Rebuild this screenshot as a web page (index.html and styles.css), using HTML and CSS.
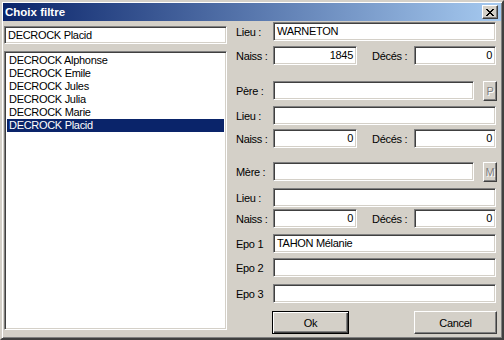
FILE: index.html
```html
<!DOCTYPE html>
<html>
<head>
<meta charset="utf-8">
<link rel="stylesheet" href="styles.css">
</head>
<body>
<div class="window">
  <div class="titlebar">
    <span class="title">Choix filtre</span>
    <div class="close">
      <svg width="8" height="7" viewBox="0 0 8 7"><path d="M0 0h2v1h1v1h2V1h1V0h2v1H7v1H6v1H5v1h1v1h1v1h1v1H6V6H5V5H3v1H2v1H0V6h1V5h1V4h1V3H2V2H1V1H0z" fill="#000"/></svg>
    </div>
  </div>
  <div class="body">
    <div class="left">
      <div class="edit search">DECROCK Placid</div>
      <div class="listbox">
        <div class="item">DECROCK Alphonse</div>
        <div class="item">DECROCK Emile</div>
        <div class="item">DECROCK Jules</div>
        <div class="item">DECROCK Julia</div>
        <div class="item">DECROCK Marie</div>
        <div class="item selected">DECROCK Placid</div>
      </div>
    </div>
    <div class="right">
      <div class="row r-lieu1"><span class="lbl">Lieu :</span><div class="edit full">WARNETON</div></div>
      <div class="row r-g5"><span class="lbl">Naiss :</span><div class="edit num">1845</div><span class="lbl2">Décés :</span><div class="edit num2">0</div></div>
      <div class="row r-g16"><span class="lbl">Père :</span><div class="edit parent"></div><div class="btn small"><span class="dis">P</span></div></div>
      <div class="row r-g6"><span class="lbl">Lieu :</span><div class="edit full"></div></div>
      <div class="row r-g4"><span class="lbl">Naiss :</span><div class="edit num">0</div><span class="lbl2">Décés :</span><div class="edit num2">0</div></div>
      <div class="row r-g14"><span class="lbl">Mère :</span><div class="edit parent"></div><div class="btn small"><span class="dis">M</span></div></div>
      <div class="row r-g7"><span class="lbl">Lieu :</span><div class="edit full"></div></div>
      <div class="row r-g2"><span class="lbl">Naiss :</span><div class="edit num">0</div><span class="lbl2">Décés :</span><div class="edit num2">0</div></div>
      <div class="row r-g6"><span class="lbl">Epo 1</span><div class="edit full">TAHON Mélanie</div></div>
      <div class="row r-g5"><span class="lbl">Epo 2</span><div class="edit full"></div></div>
      <div class="row r-g7"><span class="lbl">Epo 3</span><div class="edit full"></div></div>
      <div class="row buttons">
        <div class="btn default"><span>Ok</span></div>
        <div class="btn cancel"><span>Cancel</span></div>
      </div>
    </div>
  </div>
</div>
</body>
</html>
```

FILE: styles.css
```css
* { box-sizing: border-box; }
html, body { margin: 0; padding: 0; background: #d4d0c8; }
body {
  font-family: "Liberation Sans", Arial, sans-serif;
  font-size: 11px;
  letter-spacing: -0.3px;
  color: #000;
}
.window {
  width: 504px;
  height: 340px;
  background: #d4d0c8;
  border-style: solid;
  border-width: 2px;
  border-color: #d4d0c8 #404040 #404040 #d4d0c8;
  box-shadow: inset 1px 1px 0 #fff, inset -1px -1px 0 #808080;
  padding: 1px;
  display: flex;
  flex-direction: column;
}
.titlebar {
  height: 18px;
  background: linear-gradient(to right, #0a246a, #a6caf0);
  display: flex;
  align-items: center;
  justify-content: space-between;
  padding: 0 3px 0 2px;
}
.title {
  color: #fff;
  font-family: "Liberation Sans", Arial, sans-serif;
  font-weight: bold;
  font-size: 11.5px;
  letter-spacing: 0;
}
.close {
  width: 16px;
  height: 14px;
  background: #d4d0c8;
  border-style: solid;
  border-width: 1px;
  border-color: #fff #404040 #404040 #fff;
  box-shadow: inset -1px -1px 0 #808080;
  display: flex;
  align-items: center;
  justify-content: center;
}
.close svg { display: block; margin-left: -1px; }
.body {
  flex: 1;
  display: flex;
}
.left {
  width: 223px;
  margin-left: 1px;
  display: flex;
  flex-direction: column;
}
.edit {
  background: #fff;
  border-style: solid;
  border-width: 1px;
  border-color: #808080 #fff #fff #808080;
  box-shadow: inset 1px 1px 0 #404040, inset -1px -1px 0 #d4d0c8;
  height: 19px;
  padding: 0 3px;
  line-height: 17px;
  white-space: nowrap;
  overflow: hidden;
}
.search {
  margin-top: 5px;
  height: 18px;
  line-height: 16px;
}
.listbox {
  margin-top: 7px;
  height: 279px;
  background: #fff;
  border-style: solid;
  border-width: 1px;
  border-color: #808080 #fff #fff #808080;
  box-shadow: inset 1px 1px 0 #404040, inset -1px -1px 0 #d4d0c8;
  padding: 2px 2px;
}
.item {
  height: 13px;
  line-height: 13px;
  padding-left: 2px;
}
.item.selected {
  background: #0a246a;
  color: #fff;
}
.right {
  margin-left: 9px;
  width: 261px;
  display: flex;
  flex-direction: column;
}
.row {
  display: flex;
  align-items: center;
  height: 19px;
}
.r-lieu1 { margin-top: 1px; }
.r-g2 { margin-top: 2px; }
.r-g4 { margin-top: 4px; }
.r-g5 { margin-top: 5px; }
.r-g6 { margin-top: 6px; }
.r-g7 { margin-top: 7px; }
.r-g14 { margin-top: 14px; }
.r-g16 { margin-top: 16px; }
.lbl {
  width: 37px;
  flex: none;
  padding-top: 1px;
}
.lbl2 {
  width: 42px;
  margin-left: 15px;
  flex: none;
  padding-top: 1px;
}
.full { width: 223px; }
.num { width: 84px; text-align: right; }
.num2 { width: 82px; text-align: right; }
.parent { width: 201px; }
.btn {
  background: #d4d0c8;
  border-style: solid;
  border-width: 1px;
  border-color: #fff #404040 #404040 #fff;
  box-shadow: inset -1px -1px 0 #808080;
  display: flex;
  align-items: center;
  justify-content: center;
  flex: none;
}
.small {
  width: 14px;
  height: 20px;
  margin-left: 9px;
}
.dis {
  color: #808080;
  text-shadow: 1px 1px 0 #fff;
  font-size: 11px;
}
.buttons {
  margin-top: 8px;
  height: 23px;
}
.default {
  width: 77px;
  height: 23px;
  margin-left: 36px;
  border: 1px solid #000;
  box-shadow: inset 1px 1px 0 #fff, inset -1px -1px 0 #404040, inset -2px -2px 0 #808080;
}
.cancel {
  width: 83px;
  height: 23px;
  margin-left: 65px;
}
```
